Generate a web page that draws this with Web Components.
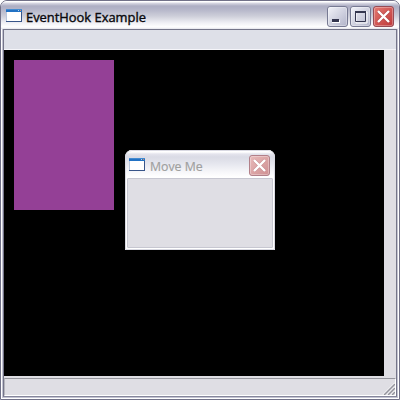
<!DOCTYPE html>
<html lang="en"><head><meta charset="utf-8"><title>EventHook Example</title>
<style>html,body{margin:0;width:400px;height:400px;overflow:hidden;background:#fff}</style></head>
<body>
<app-window>
  <title-bar slot="title" heading="EventHook Example" text-width="120"><window-button kind="min"></window-button><window-button kind="max"></window-button><window-button kind="close"></window-button></title-bar>
  <tool-window><title-bar slot="title" inactive heading="Move Me" text-width="53"><window-button kind="close" faded></window-button></title-bar></tool-window>
</app-window>
<script>
class Base extends HTMLElement{
  connectedCallback(){ if(!this.shadowRoot) this.attachShadow({mode:'open'}).innerHTML=this.view(); }
}
customElements.define('window-icon',class extends Base{view(){return `
<style>:host{display:block;width:16px;height:14px}svg{display:block}</style>
<svg width="16" height="14" shape-rendering="crispEdges"><rect width="16" height="13" fill="#fff"/><path d="M0 0h16v3H0z" fill="#2272c4"/><path d="M0 0h16v1H0z" fill="#448bd0"/><path d="M12 1h1v1h-1z" fill="#b8d4ef"/><path d="M14 1h1v1h-1z" fill="#d58a62"/><path d="M0 3h1v10H0z" fill="#b9c6dc"/><path d="M15 3h1v10h-1zM0 12h16v1H0z" fill="#385589"/></svg>`}});
customElements.define('window-button',class extends Base{view(){
const k=this.getAttribute('kind'),f=this.hasAttribute('faded');
const c=k!=='close'?['#777a93','#f3f4fa','#b0b2c8']:f?['#b28089','#e9bbbb','#cf8f91']:['#984c56','#e67b73','#bd3638'];
const g={min:'<path d="M5 14h8v3H5z" fill="#fff"/><path d="M5 13h7v3H5z" fill="#34364f"/>',
max:'<path d="M6 6h11v11H6z" fill="none" stroke="#fff"/><path d="M5 5h11v2H5z" fill="#34364f"/><path d="M5.5 5.5h10v10h-10z" fill="none" stroke="#34364f"/>',
close:`<path d="M5 5l11 11M16 5l-11 11" stroke="${f?'#b67b80':'#8e3038'}" stroke-width="3.6" opacity=".45"/><path d="M5 5l11 11M16 5l-11 11" stroke="#fff" stroke-width="2.4"/>`}[k];
return `<style>:host{display:block;width:21px;height:21px}svg{display:block}</style>
<svg width="21" height="21"><defs><linearGradient id="g" x2="1" y2="1"><stop stop-color="${c[1]}"/><stop offset="1" stop-color="${c[2]}"/></linearGradient></defs><rect x=".5" y=".5" width="20" height="20" rx="2.5" fill="url(#g)" stroke="${c[0]}"/><rect x="1.5" y="1.5" width="18" height="18" rx="1.5" fill="none" stroke="#fff" opacity=".3"/>${g}</svg>`}});
customElements.define('title-bar',class extends Base{
connectedCallback(){
  super.connectedCallback();
  const s=this.shadowRoot.querySelector('span');
  s.style.transform=`scaleX(${this.getAttribute('text-width')/s.offsetWidth})`;
}
view(){const i=this.hasAttribute('inactive');return `
<style>:host{display:flex;box-sizing:border-box;align-items:flex-start;
${i?'height:28px;padding:5px 5px 0 4px;background:linear-gradient(#fff 0 2px,#e4e4ed 4px,#dadbe5 7px,#e4e5ed 13px,#f7f7fa 22px,#fff 27px)':'height:28px;padding:5px 5px 0 5px;background:linear-gradient(#fff 0 1px,#d9d9e4 2px,#adaec3 5px,#b3b4c8 8px,#cdced9 15px,#f0f0f5 22px,#fff 26px,#e3e3ea 28px)'}}
window-icon{margin-top:3px}
h1{flex:1;margin:1px 0 0 ${i?5:4}px;font:400 13px/20px "Open Sans","Noto Sans",sans-serif;white-space:nowrap;color:${i?'#9fa09f':'#08080c'};-webkit-text-stroke:${i?.2:.4}px currentColor}
h1 span{display:inline-block;transform-origin:0 50%}
div{display:flex;gap:2px}</style>
<window-icon></window-icon><h1><span>${this.getAttribute('heading')}</span></h1><div><slot></slot></div>`}});
customElements.define('tool-window',class extends Base{view(){return `
<style>:host{position:absolute;left:124px;top:149px;width:150px;height:100px;display:grid;grid-template-rows:28px 1fr;box-sizing:border-box;background:#fff;border-radius:7px 7px 0 0;overflow:hidden}
::slotted(title-bar){min-width:0}
.body{margin:0 2px 2px;border:1px solid #c7c7d1;border-radius:1px;background:#dfdee4}
.edge{position:absolute;inset:0;border:1px solid #d9d9e2;border-radius:7px 7px 0 0}</style>
<slot name="title"></slot><div class="body"></div><div class="edge"></div>`}});
customElements.define('status-bar',class extends Base{view(){return `
<style>:host{display:flex;justify-content:flex-end;align-items:flex-end;box-sizing:border-box;border-top:1px solid #96969e;border-left:1px solid #b5b5bd;background:#dfdee4}svg{display:block}</style>
<svg width="13" height="13"><path d="M1 13L13 1M5 13L13 5M9 13L13 9" stroke="#fff" stroke-width="1.2"/><path d="M2 13L13 2M6 13L13 6M10 13L13 10" stroke="#94949d" stroke-width="1.5"/></svg>`}});
customElements.define('app-window',class extends Base{view(){return `
<style>:host{display:grid;position:relative;box-sizing:border-box;width:400px;height:400px;grid-template-rows:28px 1fr;border:1px solid #717188;border-radius:7px 7px 0 0;overflow:hidden;background:#c3c3d2;box-shadow:inset 0 0 0 1px #fff}
.frame{display:grid;grid-template-rows:19px 1px 326px 2px 1fr;margin:0 2px 2px;border:1px solid #747589;border-bottom-color:#85869b;background:#dfdee4;min-height:0}
.tools{background:#dee0e8}.line{background:#f5f5f9}
.canvas{width:380px;background:#000;box-sizing:border-box;padding:10px}
.block{width:100px;height:150px;background:#944096}
status-bar{border-right:1px solid #fff;border-bottom:1px solid #fff}</style>
<slot name="title"></slot><div class="frame"><div class="tools"></div><div class="line"></div><div class="canvas"><div class="block"></div></div><div></div><status-bar></status-bar></div><slot></slot>`}});
</script></body></html>
